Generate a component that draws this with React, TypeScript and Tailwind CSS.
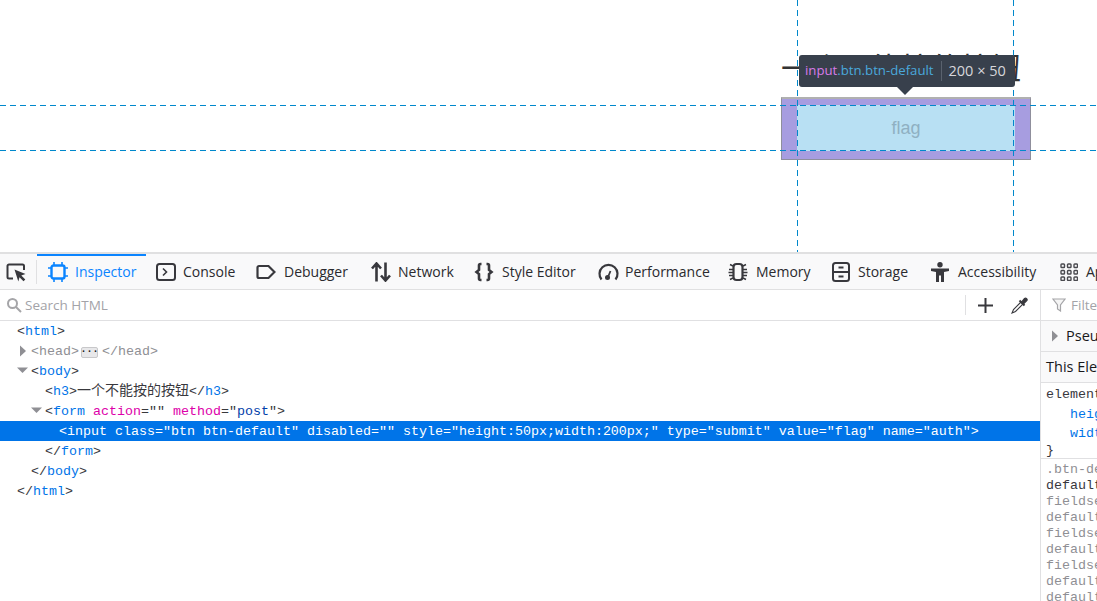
const mono = { fontFamily: '"Liberation Mono", "Noto Sans CJK SC", monospace' }

function PickerIcon() {
    return (
        <svg width="21" height="20" viewBox="0 0 21 20" fill="none">
            <path d="M7 16.500H3A1.500 1.500 0 0 1 1.500 15V4A1.500 1.500 0 0 1 3 2.500h13.500A1.500 1.500 0 0 1 18 4v4" stroke="#38383d" strokeWidth="2" />
            <path d="M8.500 7.500l11 4.500-4.200 1.500 4 4-1.800 1.800-4-4-1.200 4.200z" fill="#38383d" />
        </svg>
    )
}

function InspectorIcon() {
    return (
        <svg width="20" height="20" viewBox="0 0 20 20" fill="none" stroke="#0a84ff" strokeWidth="2.400">
            <rect x="3.500" y="3.500" width="13" height="13" rx="2" />
            <path d="M6 0v3M14 0v3M6 17v3M14 17v3M0 6h3M0 14h3M17 6h3M17 14h3" strokeWidth="1.600" />
        </svg>
    )
}

function ConsoleIcon() {
    return (
        <svg width="20" height="20" viewBox="0 0 20 20" fill="none" stroke="#38383d" strokeWidth="2">
            <rect x="1" y="2" width="18" height="16" rx="2.500" />
            <path d="M7 6.500l3.500 3.500L7 13.500" strokeWidth="1.600" />
        </svg>
    )
}

function DebuggerIcon() {
    return (
        <svg width="20" height="20" viewBox="0 0 20 20" fill="none" stroke="#38383d" strokeWidth="2.200">
            <path d="M3 4h9.500L18.500 10l-6 6H3a1.500 1.500 0 0 1-1.500-1.500v-9A1.500 1.500 0 0 1 3 4z" />
        </svg>
    )
}

function NetworkIcon() {
    return (
        <svg width="20" height="20" viewBox="0 0 20 20" fill="none" stroke="#38383d" strokeWidth="2.600">
            <path d="M5.500 19.500V2M1 6.500l4.500-5 4.500 5M14.500 .5V18M10 13.500l4.500 5 4.500-5" />
        </svg>
    )
}

function StyleIcon() {
    return (
        <svg width="20" height="20" viewBox="0 0 20 20" fill="none" stroke="#38383d" strokeWidth="2.600">
            <path d="M7.500 2H6.500A1.500 1.500 0 0 0 5 3.500v4.500L2.500 10 5 12v4.500A1.500 1.500 0 0 0 6.500 18h1" />
            <path d="M12.500 2h1A1.500 1.500 0 0 1 15 3.500v4.500l2.500 2-2.500 2v4.500a1.500 1.500 0 0 1-1.500 1.500h-1" />
        </svg>
    )
}

function PerfIcon() {
    return (
        <svg width="21" height="20" viewBox="0 0 21 20" fill="none" stroke="#38383d" strokeWidth="2.200">
            <path d="M3.500 17.500A9 9 0 1 1 17.500 17.500" />
            <path d="M10 15l2.500-6" strokeWidth="1.800" />
            <circle cx="9.500" cy="15.500" r="2.500" fill="#38383d" stroke="none" />
        </svg>
    )
}

function MemoryIcon() {
    return (
        <svg width="20" height="20" viewBox="0 0 20 20" fill="none" stroke="#38383d" strokeWidth="1.500">
            <rect x="5.500" y="2" width="9" height="16" rx="3" strokeWidth="2.200" />
            <path d="M5 4L2 2.500M5 7.500H1M5 10.500H0.500M5 13.500H1M5 16L2 17.500M15 4l3-1.500M15 7.500h4M15 10.500h4.500M15 13.500h4M15 16l3 1.500" />
        </svg>
    )
}

function StorageIcon() {
    return (
        <svg width="18" height="20" viewBox="0 0 18 20" fill="none" stroke="#38383d" strokeWidth="2">
            <rect x="1" y="1" width="16" height="18" rx="2.500" />
            <path d="M1 10h16M6.500 5.500h5M6.500 14.500h5" />
        </svg>
    )
}

function AccessIcon() {
    return (
        <svg width="20" height="20" viewBox="0 0 20 20" fill="#38383d">
            <circle cx="10" cy="2.800" r="2.700" />
            <path d="M1 6.500h18v2.600l-5 1V20h-3v-6.500h-2V20H6v-9.900l-5-1z" />
        </svg>
    )
}

function AppsIcon() {
    const cells = [1, 7.500, 14]
    return (
        <svg width="18" height="18" viewBox="0 0 18 18" fill="none" stroke="#4a4a4f" strokeWidth="1.400">
            {cells.map((y) =>
                cells.map((x) => <rect key={`${x}-${y}`} x={x} y={y} width="3.500" height="3.500" rx="0.800" />)
            )}
        </svg>
    )
}

type TabProps = { icon: React.ReactNode; label: string; active?: boolean; className: string }

function Tab({ icon, label, active, className }: TabProps) {
    return (
        <div
            className={`flex h-full shrink-0 items-center whitespace-nowrap ${className} ${
                active ? 'border-t-2 border-[#0a84ff] pb-0.5 text-[#0a84ff]' : 'text-[#2a2a2e]'
            }`}
        >
            <span className="flex shrink-0 items-center">{icon}</span>
            <span>{label}</span>
        </div>
    )
}

function Line({ indent, children, selected }: { indent: number; children: React.ReactNode; selected?: boolean }) {
    return (
        <div
            className={`h-5 whitespace-nowrap leading-[21px] ${selected ? 'bg-[#0074e8] text-white' : 'text-[#38383d]'}`}
            style={{ paddingLeft: indent }}
        >
            {children}
        </div>
    )
}

function Tag({ children }: { children: React.ReactNode }) {
    return <span className="text-[#0074e8]">{children}</span>
}

function Attr({ children }: { children: React.ReactNode }) {
    return <span className="text-[#dd00a9]">{children}</span>
}

function Arrow({ open, left, top }: { open?: boolean; left: number; top: number }) {
    return (
        <svg className="absolute" style={{ left, top }} width="12" height="12" viewBox="0 0 12 12" fill="#8f8f94">
            {open ? <path d="M0 2.500h11L5.500 8z" /> : <path d="M3 0.500v11L9 6z" />}
        </svg>
    )
}

function Rule({ children, muted }: { children: React.ReactNode; muted?: boolean }) {
    return <div className={`h-4 leading-4 ${muted ? 'text-[#8f8f94]' : 'text-[#38383d]'}`}>{children}</div>
}

export default function App() {
    return (
        <div className="flex h-[601px] w-[1097px] flex-col overflow-hidden bg-white text-[14px]" style={{ fontFamily: '"Open Sans", "Noto Sans CJK SC", sans-serif' }}>
            {/* page being inspected */}
            <div className="relative h-[252px] shrink-0 overflow-hidden">
                <h3 className="whitespace-nowrap pl-[781px] pt-[49px] text-[30px] leading-[34px] text-[#333]" style={{ fontFamily: '"Noto Sans CJK SC", serif' }}>
                    一个不能按的按钮
                </h3>

                <div className="ml-[781px] mt-[14px] h-[63px] w-[250px] border border-[#8f8f9c] border-t-2 border-t-[#b0b0b0] bg-[#a79de0] px-[15px] py-[6px]">
                    <div className="flex h-[46px] w-[218px] items-center justify-center bg-[#b8e0f3] text-[18px] text-[#8fb0c2]" style={{ fontFamily: '"Liberation Sans", sans-serif' }}>
                        flag
                    </div>
                </div>

                {/* highlighter guides */}
                <div className="absolute left-[797px] top-0 h-full w-px bg-[repeating-linear-gradient(180deg,#0088cc_0_6px,transparent_6px_10px)]" />
                <div className="absolute left-[1013px] top-0 h-full w-px bg-[repeating-linear-gradient(180deg,#0088cc_0_6px,transparent_6px_10px)]" />
                <div className="absolute left-0 top-[105px] h-px w-full bg-[repeating-linear-gradient(90deg,#0088cc_0_6px,transparent_6px_10px)]" />
                <div className="absolute left-0 top-[150px] h-px w-full bg-[repeating-linear-gradient(90deg,#0088cc_0_6px,transparent_6px_10px)]" />

                {/* infobar */}
                <div className="absolute left-[799px] top-[55px] flex h-8 w-[216px] items-center rounded-[3px] bg-[#38404c] pl-1.5 text-[13.200px] text-[#d7d7db]" style={{ fontFamily: '"Open Sans", sans-serif' }}>
                    <span className="text-[#d77be8]">input</span>
                    <span className="text-[#4aa8dc]">.btn.btn-default</span>
                    <span className="ml-[7px] mr-[7px] h-5 border-l border-[#5a626e]" />
                    <span className="text-[14.500px]">200 × 50</span>
                </div>
                <div className="absolute left-[897px] top-[87px] h-0 w-0 border-x-[8px] border-t-[8px] border-x-transparent border-t-[#38404c]" />
            </div>

            {/* toolbox */}
            <div className="flex h-[38px] shrink-0 items-center overflow-hidden border-t-2 border-b border-[#e0e0e1] bg-[#f9f9fa] text-[14px]">
                <div className="ml-[6px] flex h-6 w-[31px] shrink-0 items-center border-r border-[#e0e0e2]">
                    <PickerIcon />
                </div>
                <Tab active icon={<InspectorIcon />} label="Inspector" className="w-[109px] gap-[7px] pl-[11px]" />
                <Tab icon={<ConsoleIcon />} label="Console" className="w-[100px] gap-[7px] pl-[10px]" />
                <Tab icon={<DebuggerIcon />} label="Debugger" className="w-[115px] gap-2 pl-[10px]" />
                <Tab icon={<NetworkIcon />} label="Network" className="w-[103px] gap-[7px] pl-[10px]" />
                <Tab icon={<StyleIcon />} label="Style Editor" className="w-[124px] gap-2 pl-[10px]" />
                <Tab icon={<PerfIcon />} label="Performance" className="w-[130px] gap-[6px] pl-[10px]" />
                <Tab icon={<MemoryIcon />} label="Memory" className="w-[104px] gap-2 pl-[10px]" />
                <Tab icon={<StorageIcon />} label="Storage" className="w-[98px] gap-2 pl-[10px]" />
                <Tab icon={<AccessIcon />} label="Accessibility" className="w-[130px] gap-2 pl-[10px]" />
                <Tab icon={<AppsIcon />} label="Application" className="gap-2 pl-[10px]" />
            </div>

            <div className="flex min-h-0 flex-1">
                {/* markup panel */}
                <div className="flex w-[1041px] shrink-0 flex-col border-r border-[#e0e0e2]">
                    <div className="flex h-[31px] shrink-0 items-center border-b border-[#e0e0e2] pl-[6px]">
                        <svg width="16" height="16" viewBox="0 0 16 16" fill="none" stroke="#a5a5a8" strokeWidth="2">
                            <circle cx="6.500" cy="6.500" r="4.500" />
                            <path d="M10 10l5 5" />
                        </svg>
                        <span className="ml-[3px] flex-1 text-[13.500px] text-[#a3a3a8]">Search HTML</span>
                        <span className="h-5 border-l border-[#e0e0e2]" />
                        <svg className="ml-[11px]" width="17" height="17" viewBox="0 0 17 17" fill="none" stroke="#38383d" strokeWidth="2">
                            <path d="M8.500 1v15M1 8.500h15" />
                        </svg>
                        <svg className="ml-[17px] mr-[12px]" width="17" height="17" viewBox="0 0 17 17" fill="none" stroke="#38383d" strokeWidth="1.100">
                            <path d="M10 5L2.500 12.500 1 16l3.500-1.500L12 7z" fill="#fff" />
                            <path d="M8.500 3.500l5 5" strokeWidth="2" />
                            <path d="M10.500 5l3-3.500a1.600 1.600 0 0 1 2.300 2.200L12.500 7z" fill="#38383d" />
                        </svg>
                    </div>
                    <div className="relative text-[13.330px]" style={mono}>
                        <Line indent={17}>&lt;<Tag>html</Tag>&gt;</Line>
                        <Line indent={31}>
                            <span className="text-[#8f8f94]">&lt;head&gt;</span>
                            <span className="mx-[2px] inline-flex h-[11px] w-[17px] items-center justify-center rounded-[2px] border border-[#c8c8ca] bg-[#e8e8ea] align-[1px] text-[10px] font-bold leading-none text-[#18181a]">···</span>
                            <span className="ml-[2px] text-[#8f8f94]">&lt;/head&gt;</span>
                        </Line>
                        <Line indent={31}>&lt;<Tag>body</Tag>&gt;</Line>
                        <Line indent={45}>
                            &lt;<Tag>h3</Tag>&gt;<span className="text-[14px]">一个不能按的按钮</span>&lt;/<Tag>h3</Tag>&gt;
                        </Line>
                        <Line indent={45}>
                            &lt;<Tag>form</Tag> <Attr>action</Attr>="" <Attr>method</Attr>="<span className="text-[#003eaa]">post</span>"&gt;
                        </Line>
                        <Line indent={59} selected>
                            {'<input class="btn btn-default" disabled="" style="height:50px;width:200px;" type="submit" value="flag" name="auth">'}
                        </Line>
                        <Line indent={45}>&lt;/<Tag>form</Tag>&gt;</Line>
                        <Line indent={31}>&lt;/<Tag>body</Tag>&gt;</Line>
                        <Line indent={17}>&lt;/<Tag>html</Tag>&gt;</Line>
                        <Arrow left={17} top={24} />
                        <Arrow open left={17} top={44} />
                        <Arrow open left={31} top={84} />
                    </div>
                </div>

                {/* rules panel */}
                <div className="flex min-w-0 flex-1 flex-col overflow-hidden whitespace-nowrap">
                    <div className="flex h-[31px] shrink-0 items-center gap-[5px] border-b border-[#e0e0e2] pl-[11px] text-[13.500px] text-[#a3a3a8]">
                        <svg className="shrink-0" width="14" height="14" viewBox="0 0 14 14" fill="#f5f5f5" stroke="#a5a5a8" strokeWidth="1.200">
                            <path d="M1 1h12L8.500 7v6l-3-2V7z" />
                        </svg>
                        <span className="shrink-0">Filter Styles</span>
                    </div>
                    <div className="flex h-[31px] shrink-0 items-center gap-[5px] border-b border-[#e0e0e2] bg-[#f9f9fa] pl-[8px] text-[14.500px] text-[#18181a]">
                        <svg className="shrink-0" width="12" height="12" viewBox="0 0 12 12" fill="#8f8f94">
                            <path d="M3 0.500v11L9 6z" />
                        </svg>
                        <span className="shrink-0">Pseudo-elements</span>
                    </div>
                    <div className="flex h-[31px] shrink-0 items-center border-b border-[#e0e0e2] bg-[#f9f9fa] pl-[5px] text-[14.500px] text-[#18181a]">
                        <span className="shrink-0">This Element</span>
                    </div>
                    <div className="h-[76px] shrink-0 border-b border-[#e0e0e2] pl-[5px] pt-[2px] text-[13.330px] leading-4 text-[#38383d]" style={mono}>
                        <div className="h-5 leading-5">element {'{'}</div>
                        <div className="pl-6 text-[#0074e8]">
                            <div className="h-[19px] leading-[19px]">height: 50px;</div>
                            <div className="h-[19px] leading-[19px]">width: 200px;</div>
                        </div>
                        <div>{'}'}</div>
                    </div>
                    <div className="pl-[5px] pt-[3px] text-[13.330px]" style={mono}>
                        <Rule muted>.btn-default</Rule>
                        <Rule>default</Rule>
                        <Rule muted>fieldset</Rule>
                        <Rule muted>default</Rule>
                        <Rule muted>fieldset</Rule>
                        <Rule muted>default</Rule>
                        <Rule muted>fieldset</Rule>
                        <Rule muted>default</Rule>
                        <Rule muted>default</Rule>
                    </div>
                </div>
            </div>
        </div>
    )
}
